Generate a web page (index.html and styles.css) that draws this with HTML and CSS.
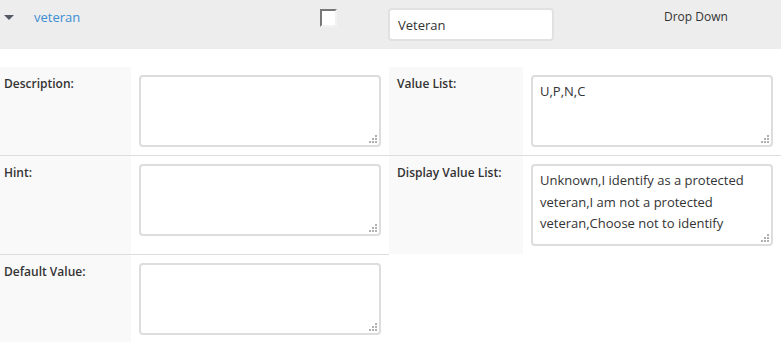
FILE: index.html
```html
<!DOCTYPE html>
<html lang="en">
<head>
    <meta charset="UTF-8">
    <title>Field</title>
    <link rel="stylesheet" href="styles.css">
</head>
<body>
<div class="field-head">
    <div class="toggle"><span class="caret"></span></div>
    <a href="#" class="field-name">veteran</a>
    <div class="flag"><input type="checkbox" class="box"></div>
    <div class="title-cell"><input type="text" class="title-input" value="Veteran"></div>
    <div class="field-type">Drop Down</div>
</div>

<table class="field-props">
    <colgroup>
        <col class="c-label">
        <col class="c-value">
        <col class="c-label2">
        <col class="c-value">
    </colgroup>
    <tr>
        <td class="label">Description:</td>
        <td><textarea class="area"></textarea></td>
        <td class="label label-right">Value List:</td>
        <td><textarea class="area">U,P,N,C</textarea></td>
    </tr>
    <tr>
        <td class="label">Hint:</td>
        <td><textarea class="area"></textarea></td>
        <td class="label label-right">Display Value List:</td>
        <td><textarea class="area tall">Unknown,I identify as a protected veteran,I am not a protected veteran,Choose not to identify</textarea></td>
    </tr>
    <tr>
        <td class="label">Default Value:</td>
        <td><textarea class="area"></textarea></td>
    </tr>
</table>
</body>
</html>
```

FILE: styles.css
```css
body {
    margin: 0;
    font-family: "Open Sans", Arial, sans-serif;
    color: #333;
    background: #fff;
}
.field-head {
    display: flex;
    align-items: flex-start;
    height: 49px;
    padding-top: 8px;
    box-sizing: border-box;
    background-color: #ededed;
}
.toggle {
    width: 34px;
    padding-left: 4px;
    box-sizing: border-box;
}
.caret {
    display: block;
    margin-top: 7px;
    width: 0;
    height: 0;
    border-left: 5.5px solid transparent;
    border-right: 5.5px solid transparent;
    border-top: 5px solid #555b66;
}
.field-name {
    width: 286px;
    font-size: 13px;
    line-height: 18px;
    color: #3b8ed2;
    text-decoration: none;
}
.flag {
    width: 69px;
}
.box {
    appearance: none;
    -webkit-appearance: none;
    display: block;
    margin: 1px 0 0;
    width: 17px;
    height: 18px;
    border-top: 2px solid #777;
    border-left: 2px solid #777;
    border-right: 2px solid #f2f2f2;
    border-bottom: 2px solid #f2f2f2;
    background: #fff;
    box-sizing: border-box;
}
.title-cell {
    width: 275px;
}
.title-input {
    display: block;
    margin: 0 0 0 -1px;
    width: 166px;
    height: 33px;
    padding: 0 8px;
    border: 2px solid #e1e1e1;
    border-radius: 4px;
    box-sizing: border-box;
    font-family: "Open Sans", Arial, sans-serif;
    font-size: 13px;
    color: #333;
    background: #fff;
}
.field-type {
    font-size: 12px;
    line-height: 18px;
}
.field-props {
    margin-top: 18px;
    width: 781px;
    table-layout: fixed;
    border-collapse: collapse;
}
.c-label {
    width: 131px;
}
.c-value {
    width: 258px;
}
.c-label2 {
    width: 134px;
}
.field-props td {
    padding: 8px;
    vertical-align: top;
}
.field-props tr + tr td {
    border-top: 1px solid #ddd;
}
.field-props td.label {
    padding: 8px 4px;
    background-color: #f9f9f9;
    font-size: 12px;
    line-height: 17px;
    font-weight: 600;
}
.field-props td.label-right {
    padding-left: 8px;
}
.area {
    display: block;
    width: 100%;
    height: 72px;
    margin: 0;
    padding: 4px 7px;
    border: 2px solid #ddd;
    border-radius: 4px;
    box-sizing: border-box;
    font-family: "Open Sans", Arial, sans-serif;
    font-size: 13px;
    line-height: 21.5px;
    color: #333;
    resize: none;
    overflow: hidden;
    /* resize grip dots */
    background: #fff url("data:image/svg+xml;utf8,<svg xmlns='http://www.w3.org/2000/svg' width='8' height='8'><g fill='%23b0b0b0'><rect x='6' y='0' width='2' height='2'/><rect x='3' y='3' width='2' height='2'/><rect x='6' y='3' width='2' height='2'/><rect x='0' y='6' width='2' height='2'/><rect x='3' y='6' width='2' height='2'/><rect x='6' y='6' width='2' height='2'/></g></svg>") no-repeat right 2px bottom 2px;
}
.area.tall {
    height: 82px;
}
```
